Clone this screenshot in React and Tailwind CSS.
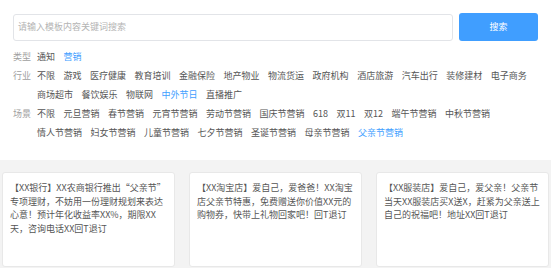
import React from "react";

const rows = [
  { label: "类型", items: ["通知", "营销"], active: "营销" },
  {
    label: "行业",
    items: ["不限", "游戏", "医疗健康", "教育培训", "金融保险", "地产物业", "物流货运", "政府机构", "酒店旅游", "汽车出行", "装修建材", "电子商务", "商场超市", "餐饮娱乐", "物联网", "中外节日", "直播推广"],
    active: "中外节日",
  },
  {
    label: "场景",
    items: ["不限", "元旦营销", "春节营销", "元宵节营销", "劳动节营销", "国庆节营销", "618", "双11", "双12", "端午节营销", "中秋节营销", "情人节营销", "妇女节营销", "儿童节营销", "七夕节营销", "圣诞节营销", "母亲节营销", "父亲节营销"],
    active: "父亲节营销",
  },
];

const cards = [
  ["【XX银行】XX农商银行推出“父亲节”", "专项理财，不妨用一份理财规划来表达", "心意！预计年化收益率XX%，期限XX", "天，咨询电话XX回T退订"],
  ["【XX淘宝店】爱自己，爱爸爸！XX淘宝", "店父亲节特惠，免费赠送你价值XX元的", "购物券，快带上礼物回家吧！回T退订"],
  ["【XX服装店】爱自己，爱父亲！父亲节", "当天XX服装店买X送X，赶紧为父亲送上", "自己的祝福吧！地址XX回T退订"],
];

export default function App() {
  return (
    <div
      className="w-[551px] h-[268px] overflow-hidden bg-[#f3f3f3] text-[9px]"
      style={{ fontFamily: '"Noto Sans CJK SC", "Noto Sans", sans-serif' }}
    >
      <div className="bg-white px-[13px] pt-[13px] pb-[18px]">
        <div className="flex items-center gap-[6px]">
          <div className="flex-1 h-[27px] border border-[#e2e4e8] rounded-[3px] flex items-center px-[4px] text-[#b4b4b4]">
            请输入模板内容关键词搜索
          </div>
          <div className="w-[79px] h-[28px] rounded-[3px] bg-[#409eff] text-white flex items-center justify-center">
            搜索
          </div>
        </div>
        <div className="mt-[6px]">
          {rows.map((r) => (
            <div key={r.label} className="flex leading-[19px]">
              <div className="w-[24px] shrink-0 text-[#a0a0a0]">{r.label}</div>
              <div className="flex flex-wrap gap-x-[8.5px] flex-1">
                {r.items.map((it) => (
                  <span
                    key={it}
                    className={it === r.active ? "text-[#409eff]" : "text-[#555]"}
                  >
                    {it}
                  </span>
                ))}
              </div>
            </div>
          ))}
        </div>
      </div>
      <div className="grid grid-cols-3 gap-[14px] px-[2px] pt-[12px]">
        {cards.map((lines, i) => (
          <div
            key={i}
            className="h-[95px] bg-white border border-[#e8e8e8] rounded-[3px] px-[7px] pt-[8px] text-[#555] leading-[13.5px]"
          >
            {lines.map((l, j) => (
              <div key={j} className="whitespace-nowrap">
                {l}
              </div>
            ))}
          </div>
        ))}
      </div>
    </div>
  );
}
